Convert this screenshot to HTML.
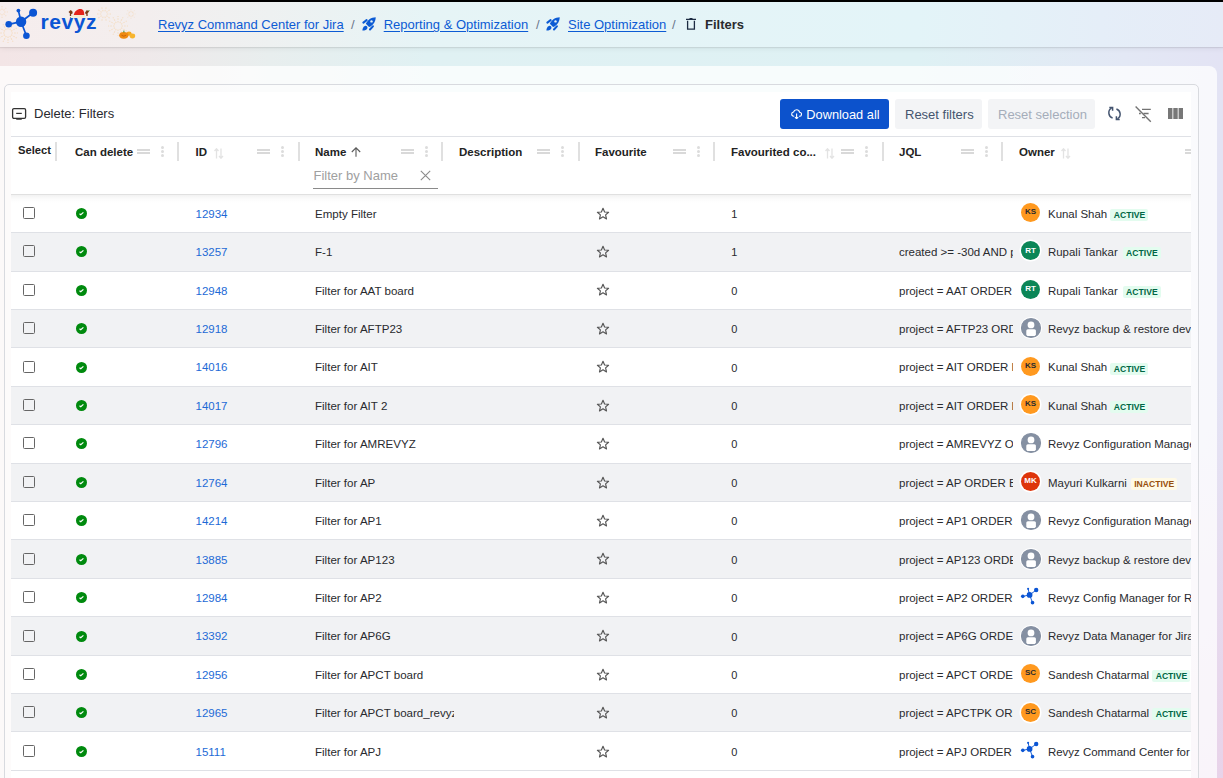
<!DOCTYPE html>
<html><head><meta charset="utf-8"><style>
*{box-sizing:border-box;margin:0;padding:0}
html,body{width:1223px;height:778px;overflow:hidden}
body{font-family:"Liberation Sans",sans-serif;position:relative;background:radial-gradient(ellipse 500px 400px at 1223px 778px,rgba(236,200,226,.6),rgba(236,200,226,0)),linear-gradient(90deg,#f3e5e6 0%,#efe9ea 12%,#e8eeee 22%,#e0f1f3 35%,#def1f4 75%,#e3e8f5 92%,#e3e3f4 100%)}
.t{position:absolute;line-height:0;white-space:nowrap}
.topbar{position:absolute;left:0;top:0;width:1223px;height:2px;background:#000}
.hdr{position:absolute;left:0;top:2px;width:1223px;height:45px;background:linear-gradient(90deg,#f6eded 0%,#f3eeee 12%,#eef1f1 22%,#e6f4f6 35%,#e3f4f8 75%,#e5eef8 90%,#e6ebf7 100%);box-shadow:0 1px 1px rgba(0,0,0,.08),0 2px 6px rgba(0,0,0,.05)}
.panel{position:absolute;left:-10px;top:66px;width:1227px;height:740px;background:rgba(255,255,255,.75);border-radius:8px}
.card{position:absolute;left:4px;top:84px;width:1195px;height:720px;border:1px solid #d8dadf;border-radius:5px;background:rgba(255,255,255,.3)}
.inner{position:absolute;left:11px;top:92px;width:1180px;height:700px;background:#fff}
.hdl{position:absolute;width:13px;height:5px}.hdl:before,.hdl:after{content:'';position:absolute;left:0;width:13px;height:1.6px;background:#d9d9d9}.hdl:before{top:0}.hdl:after{top:3.2px}
.dots{position:absolute;width:3px}
.dots i{position:absolute;left:0;width:3px;height:3px;border-radius:50%;background:#dcdcdc}
.dvd{position:absolute;top:142px;width:2px;height:19px;background:#e0e0e0}
.row{position:absolute;left:11px;width:1180px;border-bottom:1px solid #dfe1e6}
.row.alt{background:#f1f2f4}
.clip{position:absolute;overflow:hidden;height:30px}
.clip .t{top:15px}
.cb{position:absolute;left:23px;width:12px;height:12px;border:1.7px solid #666;border-radius:1.5px}
.av{position:absolute;left:1021px;width:19px;height:19px;border-radius:50%}
.av .t{left:9.5px;top:9.5px;transform:translateX(-50%);font-size:7px;font-weight:bold}
.lz{position:absolute;height:12px;border-radius:2px}
</style></head><body>
<div class="topbar"></div>
<div class="hdr"></div>
<div class="panel"></div>
<div class="card"></div>
<div class="inner"></div>

<svg style="position:absolute;left:0;top:2px" width="140" height="45" viewBox="0 0 140 45"><path d="M11.5 31.0L18.0 31.0M11.0 32.8L16.7 36.0M9.8 34.0L13.0 39.7M8.0 34.5L8.0 41.0M6.3 34.0L3.0 39.7M5.0 32.8L-0.7 36.0M4.5 31.0L-2.0 31.0M5.0 29.2L-0.7 26.0M6.2 28.0L3.0 22.3M8.0 27.5L8.0 21.0M9.8 28.0L13.0 22.3M11.0 29.2L16.7 26.0" stroke="#f5c78a" stroke-opacity="0.45" stroke-width="1.1" stroke-dasharray="1.5 1.2"/><path d="M4.1 10.0L8.0 10.0M3.5 11.5L6.2 14.2M2.0 12.1L2.0 16.0M0.5 11.5L-2.2 14.2M-0.1 10.0L-4.0 10.0M0.5 8.5L-2.2 5.8M2.0 7.9L2.0 4.0M3.5 8.5L6.2 5.8" stroke="#f5c78a" stroke-opacity="0.35" stroke-width="1.1" stroke-dasharray="1.5 1.2"/><path d="M106.8 12.0L112.0 12.0M106.3 13.6L110.5 16.7M104.9 14.7L106.5 19.6M103.1 14.7L101.5 19.6M101.7 13.6L97.5 16.7M101.2 12.0L96.0 12.0M101.7 10.4L97.5 7.3M103.1 9.3L101.5 4.4M104.9 9.3L106.5 4.4M106.3 10.4L110.5 7.3" stroke="#f5c78a" stroke-opacity="0.4" stroke-width="1.1" stroke-dasharray="1.5 1.2"/><path d="M121.5 24.0L128.0 24.0M121.0 25.8L126.7 29.0M119.8 27.0L123.0 32.7M118.0 27.5L118.0 34.0M116.2 27.0L113.0 32.7M115.0 25.8L109.3 29.0M114.5 24.0L108.0 24.0M115.0 22.2L109.3 19.0M116.2 21.0L113.0 15.3M118.0 20.5L118.0 14.0M119.8 21.0L123.0 15.3M121.0 22.2L126.7 19.0" stroke="#f5c78a" stroke-opacity="0.4" stroke-width="1.1" stroke-dasharray="1.5 1.2"/><path d="M132.8 12.0L136.0 12.0M132.2 13.2L134.5 15.5M131.0 13.8L131.0 17.0M129.8 13.2L127.5 15.5M129.2 12.0L126.0 12.0M129.8 10.8L127.5 8.5M131.0 10.2L131.0 7.0M132.2 10.8L134.5 8.5" stroke="#f5c78a" stroke-opacity="0.3" stroke-width="1.1" stroke-dasharray="1.5 1.2"/></svg>
<svg style="position:absolute;left:0px;top:0px" width="40" height="40" viewBox="0 0 40 40"><g fill="#0b55d4"><path d="M18.4 10.6L21.1 21.7M33.1 12.8L21.1 21.7M8.7 24.3L21.1 21.7M26.4 35.7L21.1 21.7" stroke="#0b55d4" stroke-width="1.7" fill="none"/><circle cx="21.1" cy="21.7" r="5.2"/><circle cx="18.4" cy="10.6" r="1.9"/><circle cx="33.1" cy="12.8" r="4"/><circle cx="8.7" cy="24.3" r="3.3"/><circle cx="26.4" cy="35.7" r="3.3"/></g></svg>
<div class="t" style="left:40.4px;top:22.40px;font-size:21px;color:#0b55d4;font-weight:bold;letter-spacing:0.6px">revyz</div>
<svg style="position:absolute;left:68px;top:8px" width="23" height="11" viewBox="0 0 23 11"><path d="M5.5 8 C6.5 2.5 10 0.6 13 1 15.5 1.3 16.5 4 16.3 8 Z" fill="#e3231b"/><rect x="4" y="7" width="13.6" height="2.6" rx="1.3" fill="#f4ecd0"/><path d="M2.5 8V2.2M1 3.5L2.5 5 4 3M2.5 6L4.6 4.5" stroke="#7b3a16" stroke-width="1.3" fill="none"/><path d="M19 8V2.2M17.8 3.5L19 5 20.6 3M19 6L17.2 4.5" stroke="#7b3a16" stroke-width="1.3" fill="none"/><circle cx="21" cy="2.6" r="0.6" fill="#3a9a3a"/><circle cx="2.6" cy="9.6" r="0.5" fill="#3a9a3a"/></svg>
<svg style="position:absolute;left:119px;top:30px" width="17" height="9" viewBox="0 0 17 9"><ellipse cx="10" cy="3.6" rx="2.6" ry="2.2" fill="#f5a623"/><ellipse cx="13.4" cy="6" rx="2.8" ry="2.4" fill="#f7b52e"/><ellipse cx="4.8" cy="5.3" rx="4.6" ry="3.4" fill="#ee8a12"/><path d="M2.5 5.2Q4.8 7.2 7.1 5.2" stroke="#b8540a" stroke-width="0.7" fill="none"/><rect x="4.4" y="0.6" width="1" height="1.8" fill="#3c8a2e"/></svg>
<div class="t" style="left:158px;top:25.00px;font-size:13px;color:#0c5bd4;font-weight:normal;text-decoration:underline;text-underline-offset:2px">Revyz Command Center for Jira</div>
<div class="t" style="left:351px;top:25.00px;font-size:13px;color:#6b778c;font-weight:normal;">/</div>
<svg style="position:absolute;left:361.5px;top:17.3px" width="14" height="14" viewBox="0 0 14 14"><path d="M13.7 0.2C9.2 0.3 5.6 2.9 3.8 6.8L7.1 10.1C11 8.3 13.6 4.7 13.7 0.2Z" fill="#0c5bd4"/><circle cx="9.5" cy="4.4" r="1.2" fill="#e6f3f6"/><path d="M1.4 5.6L4.6 3.1M8 12.5L10.9 9.3" stroke="#0c5bd4" stroke-width="2" stroke-linecap="round"/><path d="M0.4 13.6C0.5 11.3 1.3 9.4 3 8.9 4.6 8.5 5.8 9.8 5.4 11.2 5 12.7 3 13.4 0.4 13.6Z" fill="#0c5bd4"/></svg>
<div class="t" style="left:383.7px;top:25.00px;font-size:13px;color:#0c5bd4;font-weight:normal;text-decoration:underline;text-underline-offset:2px">Reporting &amp; Optimization</div>
<div class="t" style="left:536px;top:25.00px;font-size:13px;color:#6b778c;font-weight:normal;">/</div>
<svg style="position:absolute;left:546px;top:17.3px" width="14" height="14" viewBox="0 0 14 14"><path d="M13.7 0.2C9.2 0.3 5.6 2.9 3.8 6.8L7.1 10.1C11 8.3 13.6 4.7 13.7 0.2Z" fill="#0c5bd4"/><circle cx="9.5" cy="4.4" r="1.2" fill="#e6f3f6"/><path d="M1.4 5.6L4.6 3.1M8 12.5L10.9 9.3" stroke="#0c5bd4" stroke-width="2" stroke-linecap="round"/><path d="M0.4 13.6C0.5 11.3 1.3 9.4 3 8.9 4.6 8.5 5.8 9.8 5.4 11.2 5 12.7 3 13.4 0.4 13.6Z" fill="#0c5bd4"/></svg>
<div class="t" style="left:568px;top:25.00px;font-size:13px;color:#0c5bd4;font-weight:normal;text-decoration:underline;text-underline-offset:2px">Site Optimization</div>
<div class="t" style="left:672px;top:25.00px;font-size:13px;color:#6b778c;font-weight:normal;">/</div>
<svg style="position:absolute;left:685px;top:18px" width="12" height="12" viewBox="0 0 12 12"><path d="M1 1.3H11M4.5 0.6H7.5" stroke="#1c2b42" stroke-width="1.3"/><path d="M2.6 2.8V11.1H9.4V2.8" stroke="#1c2b42" stroke-width="1.3" fill="none"/></svg>
<div class="t" style="left:705px;top:24.90px;font-size:13px;color:#292a2e;font-weight:bold;">Filters</div>
<svg style="position:absolute;left:11px;top:107px" width="16" height="14" viewBox="0 0 16 14"><rect x="1.6" y="1.6" width="13" height="9.8" rx="1.3" fill="none" stroke="#333" stroke-width="1.3"/><path d="M5.2 6.4H10.8" stroke="#333" stroke-width="1.2"/><rect x="5.2" y="11" width="5.6" height="1.8" rx="0.6" fill="#333"/></svg>
<div class="t" style="left:34px;top:114.40px;font-size:13px;color:#292a2e;font-weight:normal;">Delete: Filters</div>
<div style="position:absolute;left:780px;top:99px;width:109px;height:30px;border-radius:3px;background:#0c52cc"></div>
<svg style="position:absolute;left:790.8px;top:108.6px" width="11.2" height="10.5" viewBox="0 0 13 12"><path d="M3.8 8.3H3.3C1.9 8.3 0.8 7.2 0.8 5.8 0.8 4.5 1.8 3.5 3 3.4 3.4 1.9 4.8 0.8 6.5 0.8 8.2 0.8 9.6 2 9.9 3.6 11.2 3.6 12.2 4.6 12.2 5.9 12.2 7.2 11.2 8.3 9.8 8.3H9.2" fill="none" stroke="#fff" stroke-width="1.3"/><path d="M6.5 5V11.2M4.6 9.3L6.5 11.2 8.4 9.3" fill="none" stroke="#fff" stroke-width="1.3"/></svg>
<div class="t" style="left:806.3px;top:114.70px;font-size:12.8px;color:#ffffff;font-weight:normal;">Download all</div>
<div style="position:absolute;left:895px;top:99px;width:87px;height:30px;border-radius:3px;background:#f3f4f6"></div>
<div class="t" style="left:905px;top:114.70px;font-size:13px;color:#44546f;font-weight:normal;">Reset filters</div>
<div style="position:absolute;left:988px;top:99px;width:107px;height:30px;border-radius:3px;background:#f3f4f6"></div>
<div class="t" style="left:998px;top:114.70px;font-size:13px;color:#a5adba;font-weight:normal;">Reset selection</div>
<svg style="position:absolute;left:1107px;top:106px" width="15" height="15" viewBox="0 0 15 15"><path d="M4.6 2.2C2.6 3.2 1.6 5.4 1.9 7.6 2.2 9.7 3.7 11.4 5.6 12" fill="none" stroke="#44546f" stroke-width="1.5"/><path d="M2.3 1.6H5.6V4.8" fill="none" stroke="#44546f" stroke-width="1.5"/><path d="M10.4 12.8C12.4 11.8 13.4 9.6 13.1 7.4 12.8 5.3 11.3 3.6 9.4 3" fill="none" stroke="#44546f" stroke-width="1.5"/><path d="M12.7 13.4H9.4V10.2" fill="none" stroke="#44546f" stroke-width="1.5"/></svg>
<svg style="position:absolute;left:1135px;top:106px" width="17" height="17" viewBox="0 0 17 17"><path d="M0.6 0.6L15.8 15.8" stroke="#737373" stroke-width="1.4"/><path d="M7 3.4H15.8M4 7.5H5.8M8.5 7.5H13.6M7 11.6H10" stroke="#737373" stroke-width="1.4"/></svg>
<svg style="position:absolute;left:1168px;top:108px" width="16" height="12" viewBox="0 0 16 12"><rect x="0" y="0" width="4.4" height="11" fill="#777"/><rect x="5.3" y="0" width="4.4" height="11" fill="#777"/><rect x="10.6" y="0" width="4.4" height="11" fill="#777"/></svg>
<div style="position:absolute;left:11px;top:136px;width:1180px;height:1px;background:#dfe1e6"></div>
<div class="t" style="left:18px;top:149.50px;font-size:11.2px;color:#232323;font-weight:bold;">Select</div>
<div class="t" style="left:75px;top:151.50px;font-size:11.5px;color:#232323;font-weight:bold;">Can delete</div>
<div class="t" style="left:195.5px;top:151.50px;font-size:11.5px;color:#232323;font-weight:bold;">ID</div>
<div class="t" style="left:315px;top:151.50px;font-size:11.5px;color:#232323;font-weight:bold;">Name</div>
<div class="t" style="left:459px;top:151.50px;font-size:11.5px;color:#232323;font-weight:bold;">Description</div>
<div class="t" style="left:595px;top:151.50px;font-size:11.5px;color:#232323;font-weight:bold;">Favourite</div>
<div class="t" style="left:731px;top:151.50px;font-size:11.5px;color:#232323;font-weight:bold;">Favourited co...</div>
<div class="t" style="left:899px;top:151.50px;font-size:11.5px;color:#232323;font-weight:bold;">JQL</div>
<div class="t" style="left:1019px;top:151.50px;font-size:11.5px;color:#232323;font-weight:bold;">Owner</div>
<div class="dvd" style="left:55px"></div>
<div class="dvd" style="left:177px"></div>
<div class="dvd" style="left:297.5px"></div>
<div class="dvd" style="left:441px"></div>
<div class="dvd" style="left:577.5px"></div>
<div class="dvd" style="left:713px"></div>
<div class="dvd" style="left:881.5px"></div>
<div class="dvd" style="left:1001px"></div>
<div class="hdl" style="left:137px;top:149.1px"></div>
<div class="hdl" style="left:257px;top:149.1px"></div>
<div class="hdl" style="left:401px;top:149.1px"></div>
<div class="hdl" style="left:537px;top:149.1px"></div>
<div class="hdl" style="left:673px;top:149.1px"></div>
<div class="hdl" style="left:841px;top:149.1px"></div>
<div class="hdl" style="left:961px;top:149.1px"></div>
<div style="position:absolute;left:1185px;top:149.1px;width:6px;height:5px;overflow:hidden"><div class="hdl" style="left:0;top:0"></div></div>
<div class="dots" style="left:161px;top:145.6px"><i style="top:0"></i><i style="top:4.4px"></i><i style="top:8.8px"></i></div>
<div class="dots" style="left:281px;top:145.6px"><i style="top:0"></i><i style="top:4.4px"></i><i style="top:8.8px"></i></div>
<div class="dots" style="left:425px;top:145.6px"><i style="top:0"></i><i style="top:4.4px"></i><i style="top:8.8px"></i></div>
<div class="dots" style="left:561px;top:145.6px"><i style="top:0"></i><i style="top:4.4px"></i><i style="top:8.8px"></i></div>
<div class="dots" style="left:697px;top:145.6px"><i style="top:0"></i><i style="top:4.4px"></i><i style="top:8.8px"></i></div>
<div class="dots" style="left:865px;top:145.6px"><i style="top:0"></i><i style="top:4.4px"></i><i style="top:8.8px"></i></div>
<div class="dots" style="left:985px;top:145.6px"><i style="top:0"></i><i style="top:4.4px"></i><i style="top:8.8px"></i></div>
<svg style="position:absolute;left:214px;top:147.5px" width="10" height="11" viewBox="0 0 10 11"><path d="M2.5 10.5V1M0.5 3L2.5 0.8L4.5 3" stroke="#e3e3e3" stroke-width="1.3" fill="none"/><path d="M7 0.5V10M5 8L7 10.2L9 8" stroke="#e3e3e3" stroke-width="1.3" fill="none"/></svg>
<svg style="position:absolute;left:824.5px;top:147.5px" width="10" height="11" viewBox="0 0 10 11"><path d="M2.5 10.5V1M0.5 3L2.5 0.8L4.5 3" stroke="#e3e3e3" stroke-width="1.3" fill="none"/><path d="M7 0.5V10M5 8L7 10.2L9 8" stroke="#e3e3e3" stroke-width="1.3" fill="none"/></svg>
<svg style="position:absolute;left:1060.5px;top:147.5px" width="10" height="11" viewBox="0 0 10 11"><path d="M2.5 10.5V1M0.5 3L2.5 0.8L4.5 3" stroke="#e3e3e3" stroke-width="1.3" fill="none"/><path d="M7 0.5V10M5 8L7 10.2L9 8" stroke="#e3e3e3" stroke-width="1.3" fill="none"/></svg>
<svg style="position:absolute;left:351.3px;top:147.1px" width="10" height="10" viewBox="0 0 10 10"><path d="M5 9.8V0.9M0.8 5L5 0.8L9.2 5" stroke="#5a5a5a" stroke-width="1.1" fill="none"/></svg>
<div class="t" style="left:313.5px;top:175.90px;font-size:13px;color:#a0a0a0;font-weight:normal;">Filter by Name</div>
<svg style="position:absolute;left:419.9px;top:169.8px" width="11" height="11" viewBox="0 0 11 11"><path d="M0.8 0.8L10.2 10.2M10.2 0.8L0.8 10.2" stroke="#8c8c8c" stroke-width="1.1"/></svg>
<div style="position:absolute;left:313px;top:188px;width:125px;height:1px;background:#8a8a8a"></div>
<div style="position:absolute;left:11px;top:194px;width:1180px;height:1px;background:#e0e0e0"></div>
<div class="row" style="top:195px;height:38px"></div>
<div class="cb" style="top:206.90px"></div>
<svg style="position:absolute;left:76px;top:207.90px" width="11" height="11" viewBox="0 0 11 11"><circle cx="5.5" cy="5.5" r="5.5" fill="#008a0e"/><path d="M3.5 5.8L4.8 6.8L7.4 4.4" stroke="#fff" stroke-width="1.2" fill="none"/></svg>
<div class="t" style="left:195.5px;top:213.72px;font-size:11.5px;color:#1d6ad6;font-weight:normal;">12934</div>
<div class="clip" style="left:315px;top:198.50px;width:139px"><div class="t" style="left:0px;top:15.22px;font-size:11.55px;color:#292a2e;font-weight:normal;">Empty Filter</div></div>
<svg style="position:absolute;left:596px;top:206.50px" width="14" height="14" viewBox="0 0 14 14"><path d="M7 1.3L8.6 5 12.6 5.3 9.6 7.9 10.5 11.9 7 9.8 3.5 11.9 4.4 7.9 1.4 5.3 5.4 5Z" fill="none" stroke="#555" stroke-width="1.15" stroke-linejoin="round"/></svg>
<div class="t" style="left:731.2px;top:213.80px;font-size:11px;color:#292a2e;font-weight:normal;">1</div>
<div class="clip" style="left:899px;top:198.50px;width:114px"><div class="t" style="left:0px;top:15.22px;font-size:11.5px;color:#292a2e;font-weight:normal;"></div></div>
<div class="av" style="top:203.00px;background:#ff991f;box-shadow:0 0 0 1.5px #fff"><div class="t" style="left:9.5px;top:9.30px;font-size:8px;color:#292a2e;font-weight:bold;transform:translateX(-50%)">KS</div></div>
<div class="clip" style="left:1047.5px;top:198.50px;width:143.5px"><div class="t" style="left:0.5px;top:15.22px;font-size:11.45px;color:#292a2e;font-weight:normal;">Kunal Shah</div></div>
<div class="lz" style="left:1110.3px;top:208.90px;width:38px;background:#e3fcef"></div>
<div class="t" style="left:1113.8px;top:214.80px;font-size:8.6px;color:#006644;font-weight:bold;letter-spacing:0px">ACTIVE</div>
<div class="row alt" style="top:233px;height:39px"></div>
<div class="cb" style="top:245.33px"></div>
<svg style="position:absolute;left:76px;top:246.33px" width="11" height="11" viewBox="0 0 11 11"><circle cx="5.5" cy="5.5" r="5.5" fill="#008a0e"/><path d="M3.5 5.8L4.8 6.8L7.4 4.4" stroke="#fff" stroke-width="1.2" fill="none"/></svg>
<div class="t" style="left:195.5px;top:252.15px;font-size:11.5px;color:#1d6ad6;font-weight:normal;">13257</div>
<div class="clip" style="left:315px;top:236.93px;width:139px"><div class="t" style="left:0px;top:15.22px;font-size:11.55px;color:#292a2e;font-weight:normal;">F-1</div></div>
<svg style="position:absolute;left:596px;top:244.93px" width="14" height="14" viewBox="0 0 14 14"><path d="M7 1.3L8.6 5 12.6 5.3 9.6 7.9 10.5 11.9 7 9.8 3.5 11.9 4.4 7.9 1.4 5.3 5.4 5Z" fill="none" stroke="#555" stroke-width="1.15" stroke-linejoin="round"/></svg>
<div class="t" style="left:731.2px;top:252.23px;font-size:11px;color:#292a2e;font-weight:normal;">1</div>
<div class="clip" style="left:899px;top:236.93px;width:114px"><div class="t" style="left:0px;top:15.22px;font-size:11.5px;color:#292a2e;font-weight:normal;">created &gt;= -30d AND project = X</div></div>
<div class="av" style="top:241.43px;background:#0b8657;box-shadow:0 0 0 1.5px #fff"><div class="t" style="left:9.5px;top:9.30px;font-size:8px;color:#fff;font-weight:bold;transform:translateX(-50%)">RT</div></div>
<div class="clip" style="left:1047.5px;top:236.93px;width:143.5px"><div class="t" style="left:0.5px;top:15.22px;font-size:11.45px;color:#292a2e;font-weight:normal;">Rupali Tankar</div></div>
<div class="lz" style="left:1122.6px;top:247.33px;width:38px;background:#e3fcef"></div>
<div class="t" style="left:1126.1px;top:253.23px;font-size:8.6px;color:#006644;font-weight:bold;letter-spacing:0px">ACTIVE</div>
<div class="row" style="top:272px;height:38px"></div>
<div class="cb" style="top:283.76px"></div>
<svg style="position:absolute;left:76px;top:284.76px" width="11" height="11" viewBox="0 0 11 11"><circle cx="5.5" cy="5.5" r="5.5" fill="#008a0e"/><path d="M3.5 5.8L4.8 6.8L7.4 4.4" stroke="#fff" stroke-width="1.2" fill="none"/></svg>
<div class="t" style="left:195.5px;top:290.58px;font-size:11.5px;color:#1d6ad6;font-weight:normal;">12948</div>
<div class="clip" style="left:315px;top:275.36px;width:139px"><div class="t" style="left:0px;top:15.22px;font-size:11.55px;color:#292a2e;font-weight:normal;">Filter for AAT board</div></div>
<svg style="position:absolute;left:596px;top:283.36px" width="14" height="14" viewBox="0 0 14 14"><path d="M7 1.3L8.6 5 12.6 5.3 9.6 7.9 10.5 11.9 7 9.8 3.5 11.9 4.4 7.9 1.4 5.3 5.4 5Z" fill="none" stroke="#555" stroke-width="1.15" stroke-linejoin="round"/></svg>
<div class="t" style="left:731.2px;top:290.66px;font-size:11px;color:#292a2e;font-weight:normal;">0</div>
<div class="clip" style="left:899px;top:275.36px;width:114px"><div class="t" style="left:0px;top:15.22px;font-size:11.5px;color:#292a2e;font-weight:normal;">project = AAT ORDER BY</div></div>
<div class="av" style="top:279.86px;background:#0b8657;box-shadow:0 0 0 1.5px #fff"><div class="t" style="left:9.5px;top:9.30px;font-size:8px;color:#fff;font-weight:bold;transform:translateX(-50%)">RT</div></div>
<div class="clip" style="left:1047.5px;top:275.36px;width:143.5px"><div class="t" style="left:0.5px;top:15.22px;font-size:11.45px;color:#292a2e;font-weight:normal;">Rupali Tankar</div></div>
<div class="lz" style="left:1122.6px;top:285.76px;width:38px;background:#e3fcef"></div>
<div class="t" style="left:1126.1px;top:291.66px;font-size:8.6px;color:#006644;font-weight:bold;letter-spacing:0px">ACTIVE</div>
<div class="row alt" style="top:310px;height:38px"></div>
<div class="cb" style="top:322.19px"></div>
<svg style="position:absolute;left:76px;top:323.19px" width="11" height="11" viewBox="0 0 11 11"><circle cx="5.5" cy="5.5" r="5.5" fill="#008a0e"/><path d="M3.5 5.8L4.8 6.8L7.4 4.4" stroke="#fff" stroke-width="1.2" fill="none"/></svg>
<div class="t" style="left:195.5px;top:329.01px;font-size:11.5px;color:#1d6ad6;font-weight:normal;">12918</div>
<div class="clip" style="left:315px;top:313.79px;width:139px"><div class="t" style="left:0px;top:15.22px;font-size:11.55px;color:#292a2e;font-weight:normal;">Filter for AFTP23</div></div>
<svg style="position:absolute;left:596px;top:321.79px" width="14" height="14" viewBox="0 0 14 14"><path d="M7 1.3L8.6 5 12.6 5.3 9.6 7.9 10.5 11.9 7 9.8 3.5 11.9 4.4 7.9 1.4 5.3 5.4 5Z" fill="none" stroke="#555" stroke-width="1.15" stroke-linejoin="round"/></svg>
<div class="t" style="left:731.2px;top:329.09px;font-size:11px;color:#292a2e;font-weight:normal;">0</div>
<div class="clip" style="left:899px;top:313.79px;width:114px"><div class="t" style="left:0px;top:15.22px;font-size:11.5px;color:#292a2e;font-weight:normal;">project = AFTP23 ORDER BY</div></div>
<svg style="position:absolute;left:1019.5px;top:317.19px" width="22" height="22" viewBox="0 0 22 22"><circle cx="11" cy="11" r="11" fill="#fff"/><circle cx="11" cy="11" r="9.5" fill="#8590a2"/><circle cx="11" cy="7.9" r="3.4" fill="#fff"/><rect x="6.3" y="12.2" width="9.6" height="6.8" rx="1.6" fill="#fff"/><circle cx="11" cy="11" r="9.5" fill="none" stroke="#8590a2" stroke-width="1.2"/></svg>
<div class="clip" style="left:1047.5px;top:313.79px;width:143.5px"><div class="t" style="left:0.5px;top:15.22px;font-size:11.45px;color:#292a2e;font-weight:normal;">Revyz backup &amp; restore dev</div></div>
<div class="row" style="top:348px;height:39px"></div>
<div class="cb" style="top:360.62px"></div>
<svg style="position:absolute;left:76px;top:361.62px" width="11" height="11" viewBox="0 0 11 11"><circle cx="5.5" cy="5.5" r="5.5" fill="#008a0e"/><path d="M3.5 5.8L4.8 6.8L7.4 4.4" stroke="#fff" stroke-width="1.2" fill="none"/></svg>
<div class="t" style="left:195.5px;top:367.44px;font-size:11.5px;color:#1d6ad6;font-weight:normal;">14016</div>
<div class="clip" style="left:315px;top:352.22px;width:139px"><div class="t" style="left:0px;top:15.22px;font-size:11.55px;color:#292a2e;font-weight:normal;">Filter for AIT</div></div>
<svg style="position:absolute;left:596px;top:360.22px" width="14" height="14" viewBox="0 0 14 14"><path d="M7 1.3L8.6 5 12.6 5.3 9.6 7.9 10.5 11.9 7 9.8 3.5 11.9 4.4 7.9 1.4 5.3 5.4 5Z" fill="none" stroke="#555" stroke-width="1.15" stroke-linejoin="round"/></svg>
<div class="t" style="left:731.2px;top:367.52px;font-size:11px;color:#292a2e;font-weight:normal;">0</div>
<div class="clip" style="left:899px;top:352.22px;width:114px"><div class="t" style="left:0px;top:15.22px;font-size:11.5px;color:#292a2e;font-weight:normal;">project = AIT ORDER BY</div></div>
<div class="av" style="top:356.72px;background:#ff991f;box-shadow:0 0 0 1.5px #fff"><div class="t" style="left:9.5px;top:9.30px;font-size:8px;color:#292a2e;font-weight:bold;transform:translateX(-50%)">KS</div></div>
<div class="clip" style="left:1047.5px;top:352.22px;width:143.5px"><div class="t" style="left:0.5px;top:15.22px;font-size:11.45px;color:#292a2e;font-weight:normal;">Kunal Shah</div></div>
<div class="lz" style="left:1110.3px;top:362.62px;width:38px;background:#e3fcef"></div>
<div class="t" style="left:1113.8px;top:368.52px;font-size:8.6px;color:#006644;font-weight:bold;letter-spacing:0px">ACTIVE</div>
<div class="row alt" style="top:387px;height:38px"></div>
<div class="cb" style="top:399.05px"></div>
<svg style="position:absolute;left:76px;top:400.05px" width="11" height="11" viewBox="0 0 11 11"><circle cx="5.5" cy="5.5" r="5.5" fill="#008a0e"/><path d="M3.5 5.8L4.8 6.8L7.4 4.4" stroke="#fff" stroke-width="1.2" fill="none"/></svg>
<div class="t" style="left:195.5px;top:405.87px;font-size:11.5px;color:#1d6ad6;font-weight:normal;">14017</div>
<div class="clip" style="left:315px;top:390.65px;width:139px"><div class="t" style="left:0px;top:15.22px;font-size:11.55px;color:#292a2e;font-weight:normal;">Filter for AIT 2</div></div>
<svg style="position:absolute;left:596px;top:398.65px" width="14" height="14" viewBox="0 0 14 14"><path d="M7 1.3L8.6 5 12.6 5.3 9.6 7.9 10.5 11.9 7 9.8 3.5 11.9 4.4 7.9 1.4 5.3 5.4 5Z" fill="none" stroke="#555" stroke-width="1.15" stroke-linejoin="round"/></svg>
<div class="t" style="left:731.2px;top:405.95px;font-size:11px;color:#292a2e;font-weight:normal;">0</div>
<div class="clip" style="left:899px;top:390.65px;width:114px"><div class="t" style="left:0px;top:15.22px;font-size:11.5px;color:#292a2e;font-weight:normal;">project = AIT ORDER BY</div></div>
<div class="av" style="top:395.15px;background:#ff991f;box-shadow:0 0 0 1.5px #fff"><div class="t" style="left:9.5px;top:9.30px;font-size:8px;color:#292a2e;font-weight:bold;transform:translateX(-50%)">KS</div></div>
<div class="clip" style="left:1047.5px;top:390.65px;width:143.5px"><div class="t" style="left:0.5px;top:15.22px;font-size:11.45px;color:#292a2e;font-weight:normal;">Kunal Shah</div></div>
<div class="lz" style="left:1110.3px;top:401.05px;width:38px;background:#e3fcef"></div>
<div class="t" style="left:1113.8px;top:406.95px;font-size:8.6px;color:#006644;font-weight:bold;letter-spacing:0px">ACTIVE</div>
<div class="row" style="top:425px;height:39px"></div>
<div class="cb" style="top:437.48px"></div>
<svg style="position:absolute;left:76px;top:438.48px" width="11" height="11" viewBox="0 0 11 11"><circle cx="5.5" cy="5.5" r="5.5" fill="#008a0e"/><path d="M3.5 5.8L4.8 6.8L7.4 4.4" stroke="#fff" stroke-width="1.2" fill="none"/></svg>
<div class="t" style="left:195.5px;top:444.30px;font-size:11.5px;color:#1d6ad6;font-weight:normal;">12796</div>
<div class="clip" style="left:315px;top:429.08px;width:139px"><div class="t" style="left:0px;top:15.22px;font-size:11.55px;color:#292a2e;font-weight:normal;">Filter for AMREVYZ</div></div>
<svg style="position:absolute;left:596px;top:437.08px" width="14" height="14" viewBox="0 0 14 14"><path d="M7 1.3L8.6 5 12.6 5.3 9.6 7.9 10.5 11.9 7 9.8 3.5 11.9 4.4 7.9 1.4 5.3 5.4 5Z" fill="none" stroke="#555" stroke-width="1.15" stroke-linejoin="round"/></svg>
<div class="t" style="left:731.2px;top:444.38px;font-size:11px;color:#292a2e;font-weight:normal;">0</div>
<div class="clip" style="left:899px;top:429.08px;width:114px"><div class="t" style="left:0px;top:15.22px;font-size:11.5px;color:#292a2e;font-weight:normal;">project = AMREVYZ ORDER</div></div>
<svg style="position:absolute;left:1019.5px;top:432.48px" width="22" height="22" viewBox="0 0 22 22"><circle cx="11" cy="11" r="11" fill="#fff"/><circle cx="11" cy="11" r="9.5" fill="#8590a2"/><circle cx="11" cy="7.9" r="3.4" fill="#fff"/><rect x="6.3" y="12.2" width="9.6" height="6.8" rx="1.6" fill="#fff"/><circle cx="11" cy="11" r="9.5" fill="none" stroke="#8590a2" stroke-width="1.2"/></svg>
<div class="clip" style="left:1047.5px;top:429.08px;width:143.5px"><div class="t" style="left:0.5px;top:15.22px;font-size:11.45px;color:#292a2e;font-weight:normal;">Revyz Configuration Manager</div></div>
<div class="row alt" style="top:464px;height:38px"></div>
<div class="cb" style="top:475.91px"></div>
<svg style="position:absolute;left:76px;top:476.91px" width="11" height="11" viewBox="0 0 11 11"><circle cx="5.5" cy="5.5" r="5.5" fill="#008a0e"/><path d="M3.5 5.8L4.8 6.8L7.4 4.4" stroke="#fff" stroke-width="1.2" fill="none"/></svg>
<div class="t" style="left:195.5px;top:482.73px;font-size:11.5px;color:#1d6ad6;font-weight:normal;">12764</div>
<div class="clip" style="left:315px;top:467.51px;width:139px"><div class="t" style="left:0px;top:15.22px;font-size:11.55px;color:#292a2e;font-weight:normal;">Filter for AP</div></div>
<svg style="position:absolute;left:596px;top:475.51px" width="14" height="14" viewBox="0 0 14 14"><path d="M7 1.3L8.6 5 12.6 5.3 9.6 7.9 10.5 11.9 7 9.8 3.5 11.9 4.4 7.9 1.4 5.3 5.4 5Z" fill="none" stroke="#555" stroke-width="1.15" stroke-linejoin="round"/></svg>
<div class="t" style="left:731.2px;top:482.81px;font-size:11px;color:#292a2e;font-weight:normal;">0</div>
<div class="clip" style="left:899px;top:467.51px;width:114px"><div class="t" style="left:0px;top:15.22px;font-size:11.5px;color:#292a2e;font-weight:normal;">project = AP ORDER BY</div></div>
<div class="av" style="top:472.01px;background:#de350b;box-shadow:0 0 0 1.5px #fff"><div class="t" style="left:9.5px;top:9.30px;font-size:8px;color:#fff;font-weight:bold;transform:translateX(-50%)">MK</div></div>
<div class="clip" style="left:1047.5px;top:467.51px;width:143.5px"><div class="t" style="left:0.5px;top:15.22px;font-size:11.45px;color:#292a2e;font-weight:normal;">Mayuri Kulkarni</div></div>
<div class="lz" style="left:1130.7px;top:477.91px;width:46.5px;background:#fffae6"></div>
<div class="t" style="left:1134.2px;top:483.81px;font-size:8.6px;color:#974f0c;font-weight:bold;letter-spacing:0px">INACTIVE</div>
<div class="row" style="top:502px;height:38px"></div>
<div class="cb" style="top:514.34px"></div>
<svg style="position:absolute;left:76px;top:515.34px" width="11" height="11" viewBox="0 0 11 11"><circle cx="5.5" cy="5.5" r="5.5" fill="#008a0e"/><path d="M3.5 5.8L4.8 6.8L7.4 4.4" stroke="#fff" stroke-width="1.2" fill="none"/></svg>
<div class="t" style="left:195.5px;top:521.16px;font-size:11.5px;color:#1d6ad6;font-weight:normal;">14214</div>
<div class="clip" style="left:315px;top:505.94px;width:139px"><div class="t" style="left:0px;top:15.22px;font-size:11.55px;color:#292a2e;font-weight:normal;">Filter for AP1</div></div>
<svg style="position:absolute;left:596px;top:513.94px" width="14" height="14" viewBox="0 0 14 14"><path d="M7 1.3L8.6 5 12.6 5.3 9.6 7.9 10.5 11.9 7 9.8 3.5 11.9 4.4 7.9 1.4 5.3 5.4 5Z" fill="none" stroke="#555" stroke-width="1.15" stroke-linejoin="round"/></svg>
<div class="t" style="left:731.2px;top:521.24px;font-size:11px;color:#292a2e;font-weight:normal;">0</div>
<div class="clip" style="left:899px;top:505.94px;width:114px"><div class="t" style="left:0px;top:15.22px;font-size:11.5px;color:#292a2e;font-weight:normal;">project = AP1 ORDER BY</div></div>
<svg style="position:absolute;left:1019.5px;top:509.34px" width="22" height="22" viewBox="0 0 22 22"><circle cx="11" cy="11" r="11" fill="#fff"/><circle cx="11" cy="11" r="9.5" fill="#8590a2"/><circle cx="11" cy="7.9" r="3.4" fill="#fff"/><rect x="6.3" y="12.2" width="9.6" height="6.8" rx="1.6" fill="#fff"/><circle cx="11" cy="11" r="9.5" fill="none" stroke="#8590a2" stroke-width="1.2"/></svg>
<div class="clip" style="left:1047.5px;top:505.94px;width:143.5px"><div class="t" style="left:0.5px;top:15.22px;font-size:11.45px;color:#292a2e;font-weight:normal;">Revyz Configuration Manager</div></div>
<div class="row alt" style="top:540px;height:39px"></div>
<div class="cb" style="top:552.77px"></div>
<svg style="position:absolute;left:76px;top:553.77px" width="11" height="11" viewBox="0 0 11 11"><circle cx="5.5" cy="5.5" r="5.5" fill="#008a0e"/><path d="M3.5 5.8L4.8 6.8L7.4 4.4" stroke="#fff" stroke-width="1.2" fill="none"/></svg>
<div class="t" style="left:195.5px;top:559.59px;font-size:11.5px;color:#1d6ad6;font-weight:normal;">13885</div>
<div class="clip" style="left:315px;top:544.37px;width:139px"><div class="t" style="left:0px;top:15.22px;font-size:11.55px;color:#292a2e;font-weight:normal;">Filter for AP123</div></div>
<svg style="position:absolute;left:596px;top:552.37px" width="14" height="14" viewBox="0 0 14 14"><path d="M7 1.3L8.6 5 12.6 5.3 9.6 7.9 10.5 11.9 7 9.8 3.5 11.9 4.4 7.9 1.4 5.3 5.4 5Z" fill="none" stroke="#555" stroke-width="1.15" stroke-linejoin="round"/></svg>
<div class="t" style="left:731.2px;top:559.67px;font-size:11px;color:#292a2e;font-weight:normal;">0</div>
<div class="clip" style="left:899px;top:544.37px;width:114px"><div class="t" style="left:0px;top:15.22px;font-size:11.5px;color:#292a2e;font-weight:normal;">project = AP123 ORDER BY</div></div>
<svg style="position:absolute;left:1019.5px;top:547.77px" width="22" height="22" viewBox="0 0 22 22"><circle cx="11" cy="11" r="11" fill="#fff"/><circle cx="11" cy="11" r="9.5" fill="#8590a2"/><circle cx="11" cy="7.9" r="3.4" fill="#fff"/><rect x="6.3" y="12.2" width="9.6" height="6.8" rx="1.6" fill="#fff"/><circle cx="11" cy="11" r="9.5" fill="none" stroke="#8590a2" stroke-width="1.2"/></svg>
<div class="clip" style="left:1047.5px;top:544.37px;width:143.5px"><div class="t" style="left:0.5px;top:15.22px;font-size:11.45px;color:#292a2e;font-weight:normal;">Revyz backup &amp; restore dev</div></div>
<div class="row" style="top:579px;height:38px"></div>
<div class="cb" style="top:591.20px"></div>
<svg style="position:absolute;left:76px;top:592.20px" width="11" height="11" viewBox="0 0 11 11"><circle cx="5.5" cy="5.5" r="5.5" fill="#008a0e"/><path d="M3.5 5.8L4.8 6.8L7.4 4.4" stroke="#fff" stroke-width="1.2" fill="none"/></svg>
<div class="t" style="left:195.5px;top:598.02px;font-size:11.5px;color:#1d6ad6;font-weight:normal;">12984</div>
<div class="clip" style="left:315px;top:582.80px;width:139px"><div class="t" style="left:0px;top:15.22px;font-size:11.55px;color:#292a2e;font-weight:normal;">Filter for AP2</div></div>
<svg style="position:absolute;left:596px;top:590.80px" width="14" height="14" viewBox="0 0 14 14"><path d="M7 1.3L8.6 5 12.6 5.3 9.6 7.9 10.5 11.9 7 9.8 3.5 11.9 4.4 7.9 1.4 5.3 5.4 5Z" fill="none" stroke="#555" stroke-width="1.15" stroke-linejoin="round"/></svg>
<div class="t" style="left:731.2px;top:598.10px;font-size:11px;color:#292a2e;font-weight:normal;">0</div>
<div class="clip" style="left:899px;top:582.80px;width:114px"><div class="t" style="left:0px;top:15.22px;font-size:11.5px;color:#292a2e;font-weight:normal;">project = AP2 ORDER BY</div></div>
<svg style="position:absolute;left:1018.3px;top:583.4px" width="22" height="22" viewBox="0 0 40 40"><g fill="#0b55d4"><path d="M18.4 10.6L21.1 21.7M33.1 12.8L21.1 21.7M8.7 24.3L21.1 21.7M26.4 35.7L21.1 21.7" stroke="#0b55d4" stroke-width="1.7" fill="none"/><circle cx="21.1" cy="21.7" r="5.2"/><circle cx="18.4" cy="10.6" r="1.9"/><circle cx="33.1" cy="12.8" r="4"/><circle cx="8.7" cy="24.3" r="3.3"/><circle cx="26.4" cy="35.7" r="3.3"/></g></svg>
<div class="clip" style="left:1047.5px;top:582.80px;width:143.5px"><div class="t" style="left:0.5px;top:15.22px;font-size:11.45px;color:#292a2e;font-weight:normal;">Revyz Config Manager for Rovo</div></div>
<div class="row alt" style="top:617px;height:39px"></div>
<div class="cb" style="top:629.63px"></div>
<svg style="position:absolute;left:76px;top:630.63px" width="11" height="11" viewBox="0 0 11 11"><circle cx="5.5" cy="5.5" r="5.5" fill="#008a0e"/><path d="M3.5 5.8L4.8 6.8L7.4 4.4" stroke="#fff" stroke-width="1.2" fill="none"/></svg>
<div class="t" style="left:195.5px;top:636.45px;font-size:11.5px;color:#1d6ad6;font-weight:normal;">13392</div>
<div class="clip" style="left:315px;top:621.23px;width:139px"><div class="t" style="left:0px;top:15.22px;font-size:11.55px;color:#292a2e;font-weight:normal;">Filter for AP6G</div></div>
<svg style="position:absolute;left:596px;top:629.23px" width="14" height="14" viewBox="0 0 14 14"><path d="M7 1.3L8.6 5 12.6 5.3 9.6 7.9 10.5 11.9 7 9.8 3.5 11.9 4.4 7.9 1.4 5.3 5.4 5Z" fill="none" stroke="#555" stroke-width="1.15" stroke-linejoin="round"/></svg>
<div class="t" style="left:731.2px;top:636.53px;font-size:11px;color:#292a2e;font-weight:normal;">0</div>
<div class="clip" style="left:899px;top:621.23px;width:114px"><div class="t" style="left:0px;top:15.22px;font-size:11.5px;color:#292a2e;font-weight:normal;">project = AP6G ORDER BY</div></div>
<svg style="position:absolute;left:1019.5px;top:624.63px" width="22" height="22" viewBox="0 0 22 22"><circle cx="11" cy="11" r="11" fill="#fff"/><circle cx="11" cy="11" r="9.5" fill="#8590a2"/><circle cx="11" cy="7.9" r="3.4" fill="#fff"/><rect x="6.3" y="12.2" width="9.6" height="6.8" rx="1.6" fill="#fff"/><circle cx="11" cy="11" r="9.5" fill="none" stroke="#8590a2" stroke-width="1.2"/></svg>
<div class="clip" style="left:1047.5px;top:621.23px;width:143.5px"><div class="t" style="left:0.5px;top:15.22px;font-size:11.45px;color:#292a2e;font-weight:normal;">Revyz Data Manager for Jira</div></div>
<div class="row" style="top:656px;height:38px"></div>
<div class="cb" style="top:668.06px"></div>
<svg style="position:absolute;left:76px;top:669.06px" width="11" height="11" viewBox="0 0 11 11"><circle cx="5.5" cy="5.5" r="5.5" fill="#008a0e"/><path d="M3.5 5.8L4.8 6.8L7.4 4.4" stroke="#fff" stroke-width="1.2" fill="none"/></svg>
<div class="t" style="left:195.5px;top:674.88px;font-size:11.5px;color:#1d6ad6;font-weight:normal;">12956</div>
<div class="clip" style="left:315px;top:659.66px;width:139px"><div class="t" style="left:0px;top:15.22px;font-size:11.55px;color:#292a2e;font-weight:normal;">Filter for APCT board</div></div>
<svg style="position:absolute;left:596px;top:667.66px" width="14" height="14" viewBox="0 0 14 14"><path d="M7 1.3L8.6 5 12.6 5.3 9.6 7.9 10.5 11.9 7 9.8 3.5 11.9 4.4 7.9 1.4 5.3 5.4 5Z" fill="none" stroke="#555" stroke-width="1.15" stroke-linejoin="round"/></svg>
<div class="t" style="left:731.2px;top:674.96px;font-size:11px;color:#292a2e;font-weight:normal;">0</div>
<div class="clip" style="left:899px;top:659.66px;width:114px"><div class="t" style="left:0px;top:15.22px;font-size:11.5px;color:#292a2e;font-weight:normal;">project = APCT ORDER BY</div></div>
<div class="av" style="top:664.16px;background:#ff991f;box-shadow:0 0 0 1.5px #fff"><div class="t" style="left:9.5px;top:9.30px;font-size:8px;color:#292a2e;font-weight:bold;transform:translateX(-50%)">SC</div></div>
<div class="clip" style="left:1047.5px;top:659.66px;width:143.5px"><div class="t" style="left:0.5px;top:15.22px;font-size:11.45px;color:#292a2e;font-weight:normal;">Sandesh Chatarmal</div></div>
<div class="lz" style="left:1152.2px;top:670.06px;width:38px;background:#e3fcef"></div>
<div class="t" style="left:1155.7px;top:675.96px;font-size:8.6px;color:#006644;font-weight:bold;letter-spacing:0px">ACTIVE</div>
<div class="row alt" style="top:694px;height:38px"></div>
<div class="cb" style="top:706.49px"></div>
<svg style="position:absolute;left:76px;top:707.49px" width="11" height="11" viewBox="0 0 11 11"><circle cx="5.5" cy="5.5" r="5.5" fill="#008a0e"/><path d="M3.5 5.8L4.8 6.8L7.4 4.4" stroke="#fff" stroke-width="1.2" fill="none"/></svg>
<div class="t" style="left:195.5px;top:713.31px;font-size:11.5px;color:#1d6ad6;font-weight:normal;">12965</div>
<div class="clip" style="left:315px;top:698.09px;width:139px"><div class="t" style="left:0px;top:15.22px;font-size:11.55px;color:#292a2e;font-weight:normal;">Filter for APCT board_revyz</div></div>
<svg style="position:absolute;left:596px;top:706.09px" width="14" height="14" viewBox="0 0 14 14"><path d="M7 1.3L8.6 5 12.6 5.3 9.6 7.9 10.5 11.9 7 9.8 3.5 11.9 4.4 7.9 1.4 5.3 5.4 5Z" fill="none" stroke="#555" stroke-width="1.15" stroke-linejoin="round"/></svg>
<div class="t" style="left:731.2px;top:713.39px;font-size:11px;color:#292a2e;font-weight:normal;">0</div>
<div class="clip" style="left:899px;top:698.09px;width:114px"><div class="t" style="left:0px;top:15.22px;font-size:11.5px;color:#292a2e;font-weight:normal;">project = APCTPK ORDER BY</div></div>
<div class="av" style="top:702.59px;background:#ff991f;box-shadow:0 0 0 1.5px #fff"><div class="t" style="left:9.5px;top:9.30px;font-size:8px;color:#292a2e;font-weight:bold;transform:translateX(-50%)">SC</div></div>
<div class="clip" style="left:1047.5px;top:698.09px;width:143.5px"><div class="t" style="left:0.5px;top:15.22px;font-size:11.45px;color:#292a2e;font-weight:normal;">Sandesh Chatarmal</div></div>
<div class="lz" style="left:1152.2px;top:708.49px;width:38px;background:#e3fcef"></div>
<div class="t" style="left:1155.7px;top:714.39px;font-size:8.6px;color:#006644;font-weight:bold;letter-spacing:0px">ACTIVE</div>
<div class="row" style="top:732px;height:39px"></div>
<div class="cb" style="top:744.92px"></div>
<svg style="position:absolute;left:76px;top:745.92px" width="11" height="11" viewBox="0 0 11 11"><circle cx="5.5" cy="5.5" r="5.5" fill="#008a0e"/><path d="M3.5 5.8L4.8 6.8L7.4 4.4" stroke="#fff" stroke-width="1.2" fill="none"/></svg>
<div class="t" style="left:195.5px;top:751.74px;font-size:11.5px;color:#1d6ad6;font-weight:normal;">15111</div>
<div class="clip" style="left:315px;top:736.52px;width:139px"><div class="t" style="left:0px;top:15.22px;font-size:11.55px;color:#292a2e;font-weight:normal;">Filter for APJ</div></div>
<svg style="position:absolute;left:596px;top:744.52px" width="14" height="14" viewBox="0 0 14 14"><path d="M7 1.3L8.6 5 12.6 5.3 9.6 7.9 10.5 11.9 7 9.8 3.5 11.9 4.4 7.9 1.4 5.3 5.4 5Z" fill="none" stroke="#555" stroke-width="1.15" stroke-linejoin="round"/></svg>
<div class="t" style="left:731.2px;top:751.82px;font-size:11px;color:#292a2e;font-weight:normal;">0</div>
<div class="clip" style="left:899px;top:736.52px;width:114px"><div class="t" style="left:0px;top:15.22px;font-size:11.5px;color:#292a2e;font-weight:normal;">project = APJ ORDER BY</div></div>
<svg style="position:absolute;left:1018.3px;top:737.12px" width="22" height="22" viewBox="0 0 40 40"><g fill="#0b55d4"><path d="M18.4 10.6L21.1 21.7M33.1 12.8L21.1 21.7M8.7 24.3L21.1 21.7M26.4 35.7L21.1 21.7" stroke="#0b55d4" stroke-width="1.7" fill="none"/><circle cx="21.1" cy="21.7" r="5.2"/><circle cx="18.4" cy="10.6" r="1.9"/><circle cx="33.1" cy="12.8" r="4"/><circle cx="8.7" cy="24.3" r="3.3"/><circle cx="26.4" cy="35.7" r="3.3"/></g></svg>
<div class="clip" style="left:1047.5px;top:736.52px;width:143.5px"><div class="t" style="left:0.5px;top:15.22px;font-size:11.45px;color:#292a2e;font-weight:normal;">Revyz Command Center for Jira</div></div>
<div style="position:absolute;left:11px;top:195px;width:1180px;height:8px;background:linear-gradient(rgba(0,0,0,.05),rgba(0,0,0,.015) 50%,rgba(0,0,0,0))"></div>
</body></html>
